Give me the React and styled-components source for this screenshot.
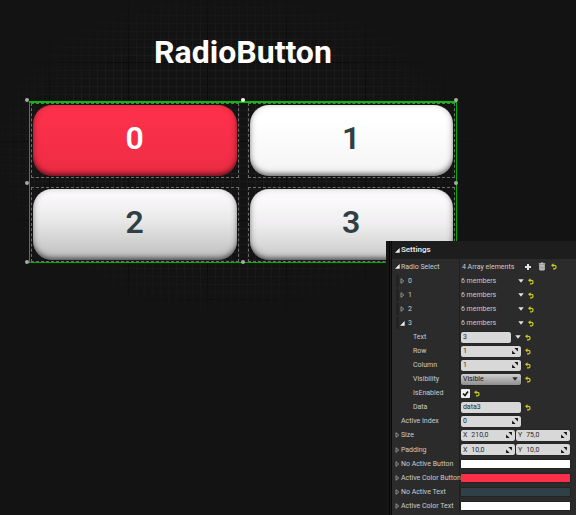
import React, { useState } from "react";
import styled, { createGlobalStyle, css } from "styled-components";

const GlobalStyle = createGlobalStyle`
  * { box-sizing: border-box; }
  body { margin: 0; background: #131313; font-family: Roboto, "Liberation Sans", sans-serif; }
  button, input, select { font: inherit; color: inherit; margin: 0; }
`;

const Page = styled.div`
  display: grid;
  grid-template-columns: minmax(0, 1fr);
  min-height: 100vh;
  background: #131313;
`;

/* ---------- designer canvas ---------- */

const Stage = styled.main`
  grid-area: 1 / 1;
  position: relative;
  isolation: isolate;
  padding: 32px 119px 0 29px;

  &::before {
    content: "";
    position: absolute;
    z-index: -1;
    inset: 0;
    background-image:
      linear-gradient(90deg, #0c0c0c 1px, transparent 1px),
      linear-gradient(#0c0c0c 1px, transparent 1px),
      repeating-linear-gradient(90deg, #1b1b1b 0 1px, transparent 1px 8px),
      repeating-linear-gradient(#1b1b1b 0 1px, transparent 1px 8px);
    background-size: 79px 79px;
    background-position: 49px 62px;
    mask-image: radial-gradient(260px 170px at 228px 152px, #000 65%, transparent 100%);
  }
`;

const Title = styled.h1`
  margin: 0 0 29px;
  font-size: 32px;
  line-height: 40px;
  font-weight: 700;
  text-align: center;
  color: #fff;
`;

const Selection = styled.div`
  position: relative;
  padding: 0 1px;
  border: 1px solid #00b000;
  border-top: 2px solid #00be00;
`;

const Handle = styled.span`
  position: absolute;
  top: ${(p) => p.$top};
  left: ${(p) => p.$left};
  width: 4px;
  height: 4px;
  margin: -2px;
  border-radius: 50%;
  background: ${(p) => (p.$bright ? "#fff" : "#a8a8a8")};
`;

const RadioGrid = styled.div`
  display: grid;
  grid-template-columns: 1fr 1fr;
  gap: 9px;
`;

const Slot = styled.div`
  padding: 1px;
  border: 1px dashed #6c6c6c;
`;

const faces = {
  active: "linear-gradient(#ff314b, #ee2c45)",
  plain: "linear-gradient(#ffffff 20%, #f4f4f4)",
  low: "linear-gradient(#faf8fa 10%, #e9e8e9 45%, #bdbdbd)",
  soft: "linear-gradient(#fbf9fb 15%, #efeeef 50%, #c8c8c8)",
};

const RadioFace = styled.label`
  display: grid;
  place-items: center;
  height: 71px;
  border-radius: 19px;
  font-size: 32px;
  line-height: 40px;
  font-weight: 600;
  padding-bottom: 6px;
  cursor: pointer;
  color: ${(p) => (p.$checked ? "#fff" : "#2f3f44")};
  background: ${(p) => faces[p.$checked ? "active" : p.$face]};
  box-shadow: inset 0 -3px 4px -1px rgba(0, 0, 0, 0.4), inset 0 -2px 7px rgba(0, 0, 0, 0.32);

  &:focus-within { outline: 1px solid #fff; }
`;

const HiddenRadio = styled.input`
  position: absolute;
  opacity: 0;
  pointer-events: none;
`;

/* ---------- details panel ---------- */

const Panel = styled.aside`
  grid-area: 1 / 1;
  place-self: end;
  position: relative;
  width: 33%;
  min-width: 190px;
  padding: 0 0 2px 6px;
  font-size: 7px;
  line-height: 10px;
  color: #cccccc;
  background: linear-gradient(90deg, #151515 0 3px, #050505 3px 4px, #1b1b1b 4px 5px, #080808 5px 6px, #2b2b2b 6px);
`;

const PanelHeader = styled.h2`
  display: flex;
  align-items: center;
  gap: 1px;
  height: 18px;
  margin: 0;
  padding-left: 3px;
  font-size: 8px;
  font-weight: 600;
  color: #e4e4e4;
  background: #1d1d1d;
`;

const Row = styled.div`
  display: grid;
  grid-template-columns: 68px minmax(0, 1fr);
  height: ${(p) => (p.$tall ? "15px" : "14px")};
`;

const indents = { 0: "3px", 1: "8px", 2: "21px" };

const NameCell = styled.div`
  display: flex;
  align-items: center;
  gap: 1px;
  padding-left: ${(p) => indents[p.$level]};
  border-right: 1px solid #1f1f1f;
  white-space: nowrap;
  ${(p) =>
    p.$level === 1 &&
    css`
      gap: 3px;
      background: linear-gradient(#222, #222) 4px 50% / 3px 12px no-repeat;
    `}
`;

const ValueCell = styled.div`
  display: flex;
  align-items: center;
  gap: ${(p) => (p.$tight ? "1px" : "4px")};
  padding: 0 6px 0 1px;
`;

const IconButton = styled.button`
  display: grid;
  place-items: center;
  flex: none;
  width: ${(p) => (p.$wide ? "10px" : "6px")};
  height: 10px;
  padding: 0;
  border: 0;
  background: none;
  color: ${(p) => (p.$reset ? "#c8c81e" : "#e2e2e2")};
  cursor: pointer;
`;

const Spacer = styled.span`
  flex: none;
  width: 5px;
`;

const Summary = styled.span`
  flex: none;
  width: ${(p) => (p.$array ? "58px" : "53px")};
  padding-left: ${(p) => (p.$array ? "1px" : "0")};
  white-space: nowrap;
`;

const Field = styled.span`
  display: flex;
  align-items: center;
  gap: 4px;
  flex: ${(p) => (p.$grow ? "1 1 0" : "none")};
  min-width: 0;
  width: ${(p) => (p.$short ? "50px" : "60px")};
  height: 11px;
  padding: 0 3px 0 2px;
  border-radius: 2px;
  color: #2a2a2a;
  background: #d8d8d8;
  box-shadow: 0 0 1px #000;
`;

const TextInput = styled.input`
  flex: 1;
  min-width: 0;
  width: 100%;
  height: 10px;
  padding: 0;
  border: 0;
  outline: 0;
  background: none;
`;

const SelectBox = styled(Field)`
  background: linear-gradient(#cfcfcf, #8f8f8f);
`;

const Select = styled.select`
  appearance: none;
  flex: 1;
  min-width: 0;
  height: 10px;
  padding: 0;
  border: 0;
  outline: 0;
  background: none;
  color: #151515;
`;

const Check = styled.input`
  appearance: none;
  width: 9px;
  height: 9px;
  border-radius: 1px;
  background: #f0f0f0;

  &:checked {
    background: #f0f0f0
      url("data:image/svg+xml,%3Csvg xmlns='http://www.w3.org/2000/svg' viewBox='0 0 9 9'%3E%3Cpath d='M2 4.5 4 6.5 7 2.5' fill='none' stroke='%23111' stroke-width='1.5'/%3E%3C/svg%3E");
  }
`;

const Swatch = styled.button`
  flex: 1;
  height: 8px;
  padding: 0;
  border: 0;
  background: ${(p) => p.$color};
  box-shadow: 0 0 1px #000;
  cursor: pointer;
`;

/* ---------- icons ---------- */

const Svg = styled.svg`
  display: block;
  flex: none;
`;

const OpenArrow = () => (
  <Svg width="5" height="5" viewBox="0 0 5 5"><path d="M4.7 0V4.7H0Z" fill="#f0f0f0" /></Svg>
);
const ClosedArrow = () => (
  <Svg width="5" height="6" viewBox="0 0 5 6"><path d="M1 0.7 3.8 3 1 5.3Z" fill="none" stroke="#a8a8a8" strokeWidth="0.8" /></Svg>
);
const Caret = () => (
  <Svg width="6" height="4" viewBox="0 0 6 4"><path d="M0.3 0.3H5.7L3 3.8Z" fill="currentColor" /></Svg>
);
const Undo = () => (
  <Svg width="6" height="7" viewBox="0 0 6 7">
    <path d="M1 2.3H3.4C5.6 2.3 5.6 5.8 3.4 5.8H2" fill="none" stroke="currentColor" strokeWidth="1.2" />
    <path d="M0 2.3 2.5 0.2V4.4Z" fill="currentColor" />
  </Svg>
);
const Plus = () => (
  <Svg width="8" height="8" viewBox="0 0 8 8"><path d="M4 1V7M1 4H7" stroke="currentColor" strokeWidth="2" /></Svg>
);
const Trash = () => (
  <Svg width="8" height="9" viewBox="0 0 8 9">
    <path d="M2.8 0.4H5.2V1.2H7.2V2.4H0.8V1.2H2.8Z M1.2 2.8H6.8V8Q4 9.2 1.2 8Z" fill="#c4c4c4" />
    <path d="M3 3.8V7.5M5 3.8V7.5" stroke="#777" strokeWidth="0.6" />
  </Svg>
);
const Spin = () => (
  <Svg width="6" height="6" viewBox="0 0 6 6">
    <path d="M2.4 0.1H5.9V3.6Z M0.1 2.4V5.9H3.6Z" fill="#111" />
  </Svg>
);

/* ---------- parts ---------- */

const Reset = ({ of }) => (
  <IconButton $reset aria-label={`Reset ${of}`}><Undo /></IconButton>
);

const NumberField = ({ label, prefix, value, grow }) => (
  <Field $grow={grow}>
    {prefix && <span>{prefix}</span>}
    <TextInput aria-label={label} defaultValue={value} />
    <Spin />
  </Field>
);

const Property = ({ name, level = 0, arrow, tall, tight, children }) => (
  <Row $tall={tall}>
    <NameCell $level={level}>
      {arrow === "open" && <OpenArrow />}
      {arrow === "closed" && <ClosedArrow />}
      {!arrow && level === 0 && <Spacer />}
      <span>{name}</span>
    </NameCell>
    <ValueCell $tight={tight}>{children}</ValueCell>
  </Row>
);

const choices = [
  { text: "0", face: "plain" },
  { text: "1", face: "plain" },
  { text: "2", face: "low" },
  { text: "3", face: "soft" },
];

const handles = [
  ["-3px", "-3px"], ["-3px", "50%", true], ["-3px", "100%"],
  ["50%", "-3px"], ["50%", "100%"],
  ["100%", "-3px"], ["100%", "50%"], ["100%", "100%"],
];

const colors = [
  ["No Active Button", "#ffffff"],
  ["Active Color Button", "#fb2f49"],
  ["No Active Text", "#2f4046"],
  ["Active Color Text", "#ffffff"],
];

export default function App() {
  const [active, setActive] = useState("0");

  return (
    <Page>
      <GlobalStyle />
      <Stage>
        <Title>RadioButton</Title>
        <Selection>
          <RadioGrid role="radiogroup" aria-label="RadioButton">
            {choices.map(({ text, face }) => (
              <Slot key={text}>
                <RadioFace $checked={active === text} $face={face}>
                  <HiddenRadio
                    type="radio"
                    name="choice"
                    value={text}
                    checked={active === text}
                    onChange={() => setActive(text)}
                  />
                  {text}
                </RadioFace>
              </Slot>
            ))}
          </RadioGrid>
          {handles.map(([top, left, bright]) => (
            <Handle key={top + left} $top={top} $left={left} $bright={bright} />
          ))}
        </Selection>
      </Stage>

      <Panel>
        <PanelHeader><OpenArrow />Settings</PanelHeader>
        <Property name="Radio Select" arrow="open" tall>
          <Summary $array>4 Array elements</Summary>
          <IconButton $wide aria-label="Add element"><Plus /></IconButton>
          <IconButton $wide aria-label="Remove all elements"><Trash /></IconButton>
          <Reset of="Radio Select" />
        </Property>
        {["0", "1", "2", "3"].map((n) => (
          <Property key={n} name={n} level={1} arrow={n === "3" ? "open" : "closed"}>
            <Summary>6 members</Summary>
            <IconButton aria-label={`Element ${n} options`}><Caret /></IconButton>
            <Reset of={`element ${n}`} />
          </Property>
        ))}
        <Property name="Text" level={2}>
          <Field $short><TextInput aria-label="Text" defaultValue="3" /></Field>
          <IconButton aria-label="Text options"><Caret /></IconButton>
          <Reset of="Text" />
        </Property>
        <Property name="Row" level={2}>
          <NumberField label="Row" value="1" />
          <Reset of="Row" />
        </Property>
        <Property name="Column" level={2}>
          <NumberField label="Column" value="1" />
          <Reset of="Column" />
        </Property>
        <Property name="Visibility" level={2}>
          <SelectBox>
            <Select aria-label="Visibility" defaultValue="Visible">
              <option>Visible</option>
            </Select>
            <Caret />
          </SelectBox>
          <Reset of="Visibility" />
        </Property>
        <Property name="IsEnabled" level={2}>
          <Check type="checkbox" aria-label="IsEnabled" defaultChecked />
          <Reset of="IsEnabled" />
        </Property>
        <Property name="Data" level={2}>
          <Field><TextInput aria-label="Data" defaultValue="data3" /></Field>
          <Reset of="Data" />
        </Property>
        <Property name="Active Index">
          <NumberField label="Active Index" value="0" />
        </Property>
        <Property name="Size" arrow="closed" tight>
          <NumberField grow label="Size X" prefix="X" value="210,0" />
          <NumberField grow label="Size Y" prefix="Y" value="75,0" />
        </Property>
        <Property name="Padding" arrow="closed" tall tight>
          <NumberField grow label="Padding X" prefix="X" value="10,0" />
          <NumberField grow label="Padding Y" prefix="Y" value="10,0" />
        </Property>
        {colors.map(([name, color]) => (
          <Property key={name} name={name} arrow="closed">
            <Swatch $color={color} aria-label={name} />
          </Property>
        ))}
      </Panel>
    </Page>
  );
}
